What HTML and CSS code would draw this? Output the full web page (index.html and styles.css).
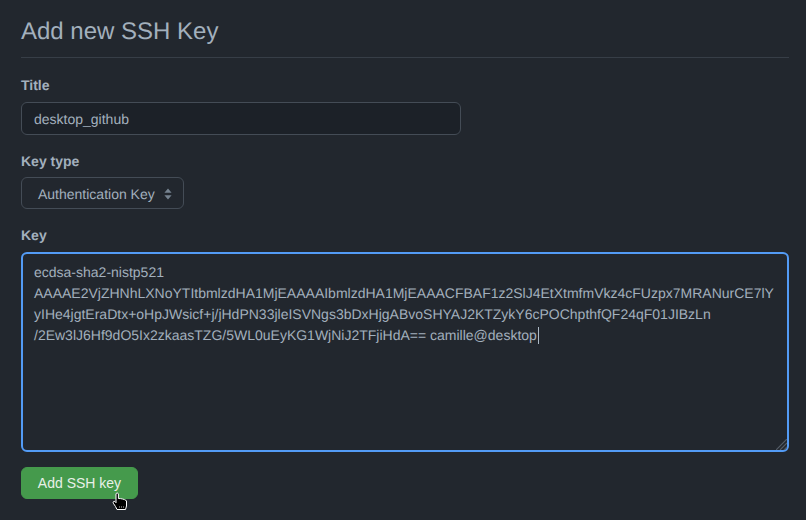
FILE: index.html
```html
<!DOCTYPE html>
<html lang="en">
<head>
<meta charset="utf-8">
<title>Add new SSH Key</title>
<link rel="stylesheet" href="styles.css">
</head>
<body>
<main class="page">
  <h2 class="heading">Add new SSH Key</h2>
  <form class="form">
    <div class="group group-title">
      <label class="label">Title</label>
      <div class="input">desktop_github</div>
    </div>
    <div class="group group-type">
      <label class="label">Key type</label>
      <div class="select">
        <span>Authentication Key</span>
        <svg class="updown" width="8" height="12" viewBox="0 0 8 12"><path d="M4 0.5 L7.6 4.8 H0.4 Z M4 11.5 L7.6 7.2 H0.4 Z" fill="#768390"/></svg>
      </div>
    </div>
    <div class="group group-key">
      <label class="label">Key</label>
      <div class="textarea">
        <div class="line">ecdsa-sha2-nistp521</div>
        <div class="line">AAAAE2VjZHNhLXNoYTItbmlzdHA1MjEAAAAIbmlzdHA1MjEAAACFBAF1z2SlJ4EtXtmfmVkz4cFUzpx7MRANurCE7lY</div>
        <div class="line">yIHe4jgtEraDtx+oHpJWsicf+j/jHdPN33jleISVNgs3bDxHjgABvoSHYAJ2KTZykY6cPOChpthfQF24qF01JIBzLn</div>
        <div class="line">/2Ew3lJ6Hf9dO5Ix2zkaasTZG/5WL0uEyKG1WjNiJ2TFjiHdA== camille@desktop<span class="caret"></span></div>
        <svg class="grip" width="11" height="11" viewBox="0 0 11 11"><path d="M0 11 L11 0 M4 11 L11 4 M8 11 L11 8" stroke="#545c66" stroke-width="1.2" fill="none"/></svg>
      </div>
    </div>
    <div class="actions">
      <button class="button" type="button">Add SSH key</button>
      <svg class="pointer" width="16" height="19" viewBox="0 0 16 19"><path d="M4 2 C4 .7 6.4 .7 6.4 2 V6.5 L8.5 6.6 L10.5 7 L12.5 7.6 L14.5 8.8 V14 L13.5 17.5 H5 L3.5 14.5 L1.3 11.2 C.6 9.8 2 8.8 3 9.7 L4 10.7 Z" fill="#000" stroke="#fff" stroke-width="1"/><path d="M7.5 14 V16 M9.5 14 V16 M11.5 14 V16" stroke="#777" stroke-width=".8"/></svg>
    </div>
  </form>
</main>
</body>
</html>
```
FILE: styles.css
```css
* { box-sizing: border-box; }
html, body { margin: 0; height: 100%; }
body {
  background: #22272e;
  color: #a3b0bd;
  font-family: "Liberation Sans", Arial, sans-serif;
  font-size: 14px;
  text-rendering: geometricPrecision;
  overflow: hidden;
}
.page { padding: 0 17px 0 21px; }
.heading {
  margin: 0;
  height: 58px;
  padding-top: 17px;
  border-bottom: 1px solid #373e47;
  font-size: 24px;
  line-height: 30px;
  font-weight: 400;
}
.form { display: flex; flex-direction: column; }
.group { display: flex; flex-direction: column; align-items: flex-start; }
.group-title { margin-top: 17px; }
.group-type { margin-top: 16px; }
.group-key { margin-top: 16px; align-items: stretch; }
.label {
  font-weight: 700;
  line-height: 20px;
  margin-bottom: 7px;
}
.group-type .label { margin-bottom: 6px; }
.input {
  width: 440px;
  height: 33px;
  padding: 1px 12px 0;
  line-height: 31px;
  background: #1c2128;
  border: 1px solid #444c56;
  border-radius: 6px;
}
.select {
  width: 163px;
  height: 32px;
  padding: 1px 11px 0 16px;
  display: flex;
  align-items: center;
  justify-content: space-between;
  border: 1px solid #444c56;
  border-radius: 6px;
}
.textarea {
  position: relative;
  height: 200px;
  padding: 8px 11px;
  border: 2px solid #539bf5;
  border-radius: 6px;
  line-height: 21px;
  white-space: nowrap;
}
.caret {
  display: inline-block;
  width: 1px;
  height: 17px;
  margin-left: 1px;
  vertical-align: -4px;
  background: #adbac7;
}
.grip { position: absolute; right: 0; bottom: 0; }
.actions { position: relative; margin-top: 15px; }
.button {
  display: block;
  width: 117px;
  height: 32px;
  padding: 0;
  background: #459a4c;
  color: #e8f0e8;
  border: 1px solid #459a4c;
  border-radius: 6px;
  font: inherit;
  line-height: 30px;
}
.pointer { position: absolute; left: 91px; top: 25px; }
```
